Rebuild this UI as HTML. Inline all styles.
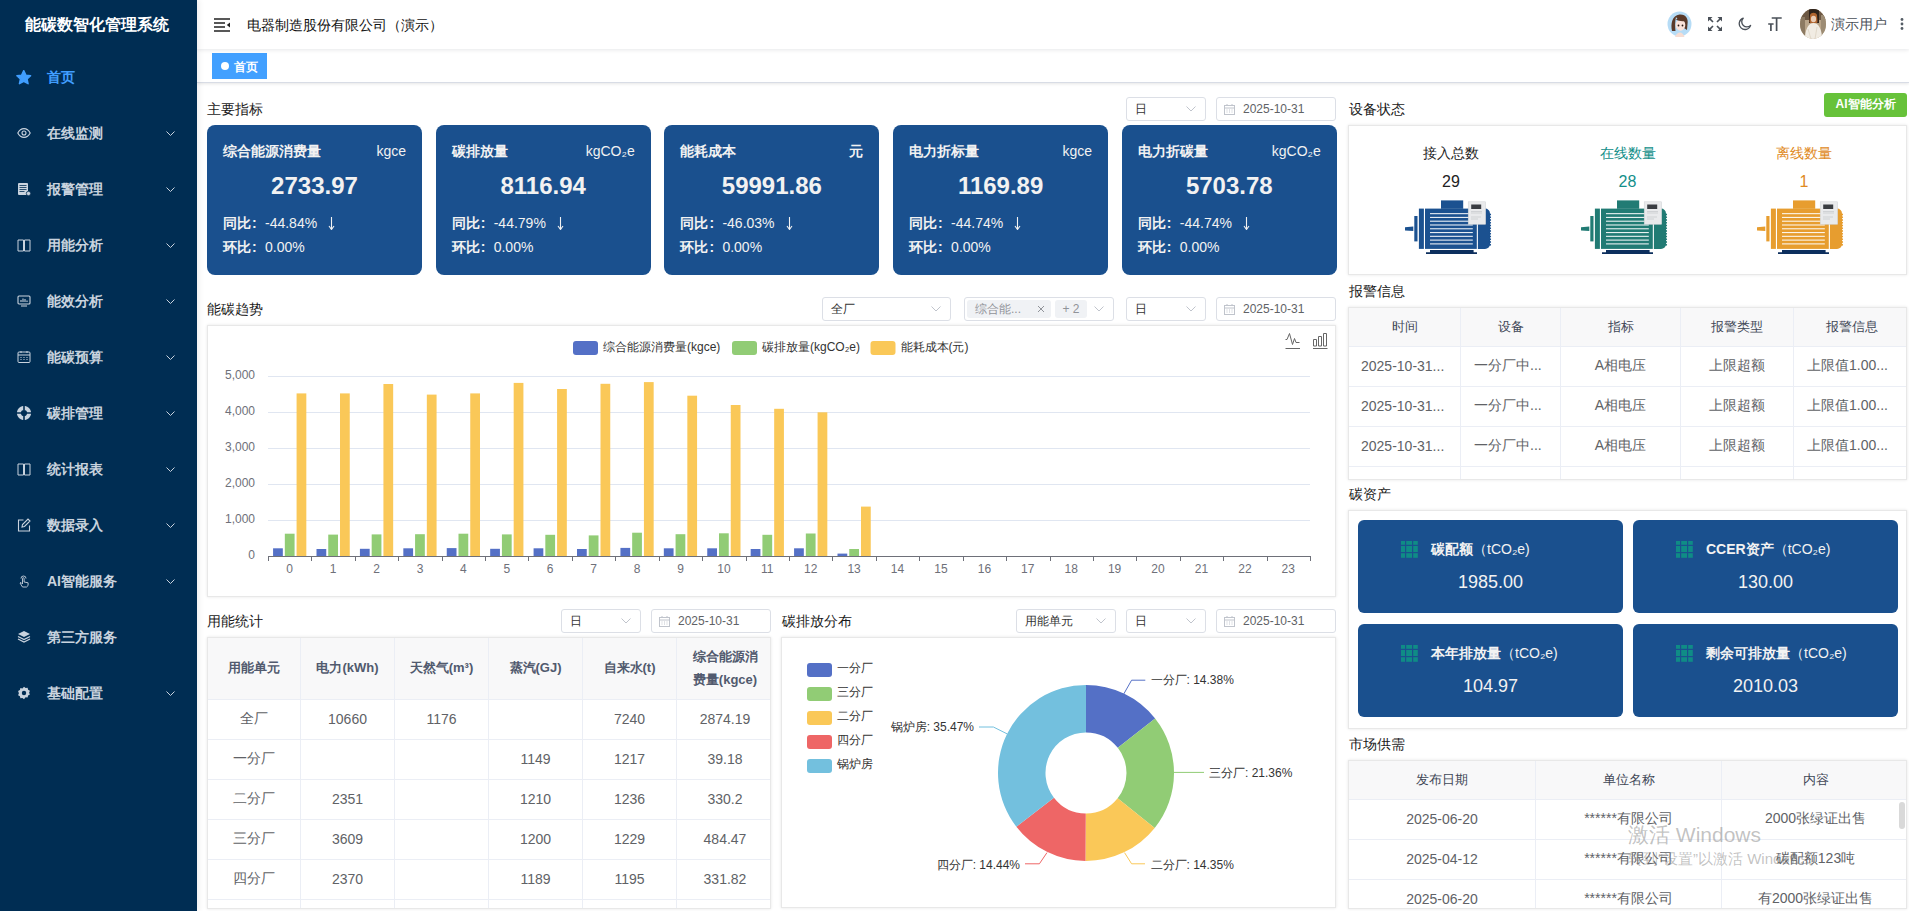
<!DOCTYPE html><html><head><meta charset="utf-8"><style>
*{box-sizing:border-box;margin:0;padding:0}
html,body{width:1909px;height:911px;overflow:hidden;background:#fff;font-family:"Liberation Sans",sans-serif;color:#303133}
.a{position:absolute}
#side{position:absolute;left:0;top:0;width:197px;height:911px;background:#002d53;box-shadow:2px 0 6px rgba(0,21,41,.07);z-index:5}
#side .logo{position:absolute;left:-2px;top:14px;width:197px;text-align:center;color:#fff;font-size:16px;font-weight:bold;line-height:22px;padding-left:0px}
.mi{position:absolute;left:0;width:197px;height:56px;color:#c9d3de;font-size:14px;font-weight:bold}
.mi svg.ic{position:absolute;left:17px;top:21px;width:14px;height:14px}
.mi .tx{position:absolute;left:47px;top:0;line-height:56px}
.mi svg.ar{position:absolute;left:166px;top:26px;width:9px;height:5px}
#hdr{position:absolute;left:197px;top:0;width:1712px;height:49px;background:#fff;box-shadow:0 1px 4px rgba(0,21,41,.10);z-index:2}
#tabs{position:absolute;left:197px;top:49px;width:1712px;height:34px;background:#fff;border-bottom:1px solid #d8dce5;box-shadow:0 1px 3px 0 rgba(0,0,0,.10)}
.tag{position:absolute;left:15px;top:4px;width:55px;height:26px;background:#42a0ff;color:#fff;font-size:12px;font-weight:bold;line-height:28px}
.tag i{position:absolute;left:9px;top:9px;width:8px;height:8px;border-radius:50%;background:#fff}
.tag span{position:absolute;left:22px;top:0}
.sec{position:absolute;font-size:14px;color:#1a1a1a;font-weight:500;line-height:20px}
.sel{position:absolute;height:24px;border:1px solid #dcdfe6;border-radius:3px;background:#fff;font-size:12px;color:#606266;line-height:22px}
.sel .v{position:absolute;left:8px;top:0;color:#333}
.sel svg.sa{position:absolute;right:9px;top:8px;width:10px;height:6px}
.sel svg.ci{position:absolute;left:7px;top:6px;width:11px;height:11px}
.sel.dt .v{left:26px;color:#606266}
.card{position:absolute;top:125px;width:215px;height:150px;background:#1a508e;border-radius:8px;color:#f2f2f2}
.card .t{position:absolute;left:16px;top:16px;font-size:14px;font-weight:bold;line-height:20px}
.card .u{position:absolute;right:16px;top:16px;font-size:14px;line-height:20px}
.card .n{position:absolute;left:0;width:100%;top:47px;text-align:center;font-size:24px;font-weight:bold;line-height:28px}
.card .l1{position:absolute;left:16px;top:88px;font-size:14px;line-height:20px;white-space:nowrap}
.card .l2{position:absolute;left:16px;top:112px;font-size:14px;line-height:20px;white-space:nowrap}
.card b{font-weight:bold}
.card .co{display:inline-block;width:14px;padding-left:1px;font-weight:bold}
.card svg.dn{position:relative;left:11px;top:2px}
.box{position:absolute;border:1px solid #e8e8e8;background:#fff;box-shadow:0 0 3px rgba(0,0,0,.10)}
table{border-collapse:collapse;table-layout:fixed}
.tb{position:absolute;font-size:14px;color:#606266}
.tb td,.tb th{border:1px solid #ebeef5;text-align:center;overflow:hidden;white-space:nowrap;padding:0}
.tb td{padding-bottom:2px}
.tb th{background:#f8f8f9;color:#515a6e;font-weight:bold;font-size:14px}
.tb th.n{font-weight:normal;font-size:13px;color:#3f4756}
.ac{position:absolute;width:265px;height:93px;background:#1a508e;border-radius:6px;color:#f2f2f2}
.ac .t{position:absolute;left:73px;top:19px;font-size:14px;font-weight:bold;line-height:20px;white-space:nowrap}
.ac .n{position:absolute;left:0;width:265px;text-align:center;top:50px;font-size:18px;line-height:24px}
.ac svg{position:absolute;left:43px;top:21px;width:17px;height:17px}
</style></head><body>
<div id="side"><div class="logo">能碳数智化管理系统</div>
<div class="mi" style="top:49px;color:#409eff"><svg class="ic" style="left:16px;top:20.5px;width:15.5px;height:15.5px" viewBox="0 0 14 14"><path d="M7 .6l1.9 4 4.3.6-3.2 2.9.9 4.3L7 10.3 3.1 12.4 4 8.1.8 5.2l4.3-.6z" fill="#409eff" stroke="#409eff" stroke-width="1.3" stroke-linejoin="round"/></svg><span class="tx">首页</span>
</div>
<div class="mi" style="top:105px;color:#c9d3de"><svg class="ic" viewBox="0 0 14 14"><path d="M.8 7C2.3 4 4.5 2.6 7 2.6S11.7 4 13.2 7C11.7 10 9.5 11.4 7 11.4S2.3 10 .8 7z" fill="none" stroke="#c9d3de" stroke-width="1.1"/><circle cx="7" cy="7" r="2" fill="none" stroke="#c9d3de" stroke-width="1.1"/></svg><span class="tx">在线监测</span>
<svg class="ar" viewBox="0 0 9 5"><path d="M.5 .5L4.5 4.5 8.5 .5" fill="none" stroke="#c9d3de" stroke-width="1"/></svg>
</div>
<div class="mi" style="top:161px;color:#c9d3de"><svg class="ic" viewBox="0 0 14 14"><rect x="1" y="1" width="10" height="12" rx="1" fill="#c9d3de"/><path d="M2.5 3.5h7M2.5 5.5h7M2.5 7.5h7M2.5 9.5h5" stroke="#002d53" stroke-width=".8"/><circle cx="11.5" cy="11.5" r="2.2" fill="#c9d3de" stroke="#002d53" stroke-width=".8"/></svg><span class="tx">报警管理</span>
<svg class="ar" viewBox="0 0 9 5"><path d="M.5 .5L4.5 4.5 8.5 .5" fill="none" stroke="#c9d3de" stroke-width="1"/></svg>
</div>
<div class="mi" style="top:217px;color:#c9d3de"><svg class="ic" viewBox="0 0 14 14"><path d="M1 2h5.5v11H1zM7.5 2H13v11H7.5z" fill="none" stroke="#c9d3de" stroke-width="1"/></svg><span class="tx">用能分析</span>
<svg class="ar" viewBox="0 0 9 5"><path d="M.5 .5L4.5 4.5 8.5 .5" fill="none" stroke="#c9d3de" stroke-width="1"/></svg>
</div>
<div class="mi" style="top:273px;color:#c9d3de"><svg class="ic" viewBox="0 0 14 14"><rect x="1" y="2" width="12" height="8" rx="1" fill="none" stroke="#c9d3de" stroke-width="1.1"/><path d="M4 8V6M6 8V4.5M8 8V5M10 8V6.5M4 12h6" stroke="#c9d3de" stroke-width="1.1"/></svg><span class="tx">能效分析</span>
<svg class="ar" viewBox="0 0 9 5"><path d="M.5 .5L4.5 4.5 8.5 .5" fill="none" stroke="#c9d3de" stroke-width="1"/></svg>
</div>
<div class="mi" style="top:329px;color:#c9d3de"><svg class="ic" viewBox="0 0 14 14"><rect x="1" y="2" width="12" height="10.5" rx="1" fill="none" stroke="#c9d3de" stroke-width="1"/><path d="M1 5h12M3.5 7.5h1M6.5 7.5h1M9.5 7.5h1M3.5 9.5h1M6.5 9.5h1M9.5 9.5h1M4 1v2M10 1v2" stroke="#c9d3de" stroke-width="1"/></svg><span class="tx">能碳预算</span>
<svg class="ar" viewBox="0 0 9 5"><path d="M.5 .5L4.5 4.5 8.5 .5" fill="none" stroke="#c9d3de" stroke-width="1"/></svg>
</div>
<div class="mi" style="top:385px;color:#c9d3de"><svg class="ic" viewBox="0 0 14 14"><circle cx="7" cy="7" r="5.1" fill="none" stroke="#c9d3de" stroke-width="4"/><path d="M7 0v4M7 10v4M0 7h4M10 7h4" stroke="#002d53" stroke-width="1.6"/></svg><span class="tx">碳排管理</span>
<svg class="ar" viewBox="0 0 9 5"><path d="M.5 .5L4.5 4.5 8.5 .5" fill="none" stroke="#c9d3de" stroke-width="1"/></svg>
</div>
<div class="mi" style="top:441px;color:#c9d3de"><svg class="ic" viewBox="0 0 14 14"><path d="M1 2h5.5v11H1zM7.5 2H13v11H7.5z" fill="none" stroke="#c9d3de" stroke-width="1"/></svg><span class="tx">统计报表</span>
<svg class="ar" viewBox="0 0 9 5"><path d="M.5 .5L4.5 4.5 8.5 .5" fill="none" stroke="#c9d3de" stroke-width="1"/></svg>
</div>
<div class="mi" style="top:497px;color:#c9d3de"><svg class="ic" viewBox="0 0 14 14"><path d="M6.5 2H1.5v11h11V7.5" fill="none" stroke="#c9d3de" stroke-width="1.1"/><path d="M5 9l.5-2.5L11 1l2 2-5.5 5.5z" fill="none" stroke="#c9d3de" stroke-width="1.1"/></svg><span class="tx">数据录入</span>
<svg class="ar" viewBox="0 0 9 5"><path d="M.5 .5L4.5 4.5 8.5 .5" fill="none" stroke="#c9d3de" stroke-width="1"/></svg>
</div>
<div class="mi" style="top:553px;color:#c9d3de"><svg class="ic" viewBox="0 0 14 14"><path d="M5.5 13l-2.5-4 1-.5 1.5 1.5V4.5a.8.8 0 011.6 0V8l4 .8v2.7L9.5 13z" fill="none" stroke="#c9d3de" stroke-width=".9"/><path d="M4 4.5a2.5 2.5 0 015 0" fill="none" stroke="#c9d3de" stroke-width=".9"/></svg><span class="tx">AI智能服务</span>
<svg class="ar" viewBox="0 0 9 5"><path d="M.5 .5L4.5 4.5 8.5 .5" fill="none" stroke="#c9d3de" stroke-width="1"/></svg>
</div>
<div class="mi" style="top:609px;color:#c9d3de"><svg class="ic" viewBox="0 0 14 14"><path d="M7 1L13 4 7 7 1 4z" fill="#c9d3de"/><path d="M1 6.5L7 9.5 13 6.5M1 9L7 12 13 9" fill="none" stroke="#c9d3de" stroke-width="1.3"/></svg><span class="tx">第三方服务</span>
</div>
<div class="mi" style="top:665px;color:#c9d3de"><svg class="ic" viewBox="0 0 14 14"><path d="M7 .8l1.6 1.3 2-.3.5 2 1.8 1-.8 1.9.8 1.9-1.8 1-.5 2-2-.3L7 13.2 5.4 11.9l-2 .3-.5-2-1.8-1 .8-1.9L1.1 5.1l1.8-1 .5-2 2 .3z" fill="#c9d3de"/><circle cx="7" cy="7" r="2.2" fill="#002d53"/></svg><span class="tx">基础配置</span>
<svg class="ar" viewBox="0 0 9 5"><path d="M.5 .5L4.5 4.5 8.5 .5" fill="none" stroke="#c9d3de" stroke-width="1"/></svg>
</div>
</div>
<div id="hdr">
<svg class="a" style="left:17px;top:18px" width="16" height="14" viewBox="0 0 16 14"><path d="M0 1h16M0 5h11M0 9h11M0 13h16" stroke="#222" stroke-width="1.6"/><path d="M16 4.5v5l-3.2-2.5z" fill="#222"/></svg>
<div class="a" style="left:50px;top:15px;font-size:14px;line-height:20px;color:#111">电器制造股份有限公司（演示）</div>
<svg class="a" style="left:1470px;top:11px" width="25" height="26" viewBox="0 0 25 26"><ellipse cx="12.5" cy="13" rx="12" ry="12.5" fill="#b6dcf6"/><path d="M5 20C3.5 13 5 4.5 12.5 3.5 19 3 21.5 8 20.5 13L20 19 17 17V10C14 10 10 8 9 6 8 10 8 16 8.5 20z" fill="#5a3a2a"/><ellipse cx="13.5" cy="14" rx="4.8" ry="5.8" fill="#fbe3da"/><path d="M9 8.5C11 10 15 10.5 18 10 17 7 14 6 12 6.5z" fill="#5a3a2a"/><circle cx="11.5" cy="14.5" r=".9" fill="#2a1a14"/><circle cx="15.5" cy="14.5" r=".9" fill="#2a1a14"/><path d="M8 26c1-3 3-4.5 5-4.5s3.5 1.5 4.5 4.5z" fill="#f6ddd3"/></svg>
<svg class="a" style="left:1511px;top:17px" width="14" height="14" viewBox="0 0 14 14"><g fill="#4a5058"><path d="M0 0h4.5L0 4.5z"/><path d="M14 0H9.5L14 4.5z"/><path d="M0 14h4.5L0 9.5z"/><path d="M14 14H9.5L14 9.5z"/></g><path d="M1.5 1.5L5 5M12.5 1.5L9 5M1.5 12.5L5 9M12.5 12.5L9 9" stroke="#4a5058" stroke-width="1.7"/></svg>
<svg class="a" style="left:1541px;top:17px" width="14" height="14" viewBox="0 0 14 14"><path d="M5.2 1.2A5.8 5.8 0 1012.6 8.4 4.6 4.6 0 015.2 1.2z" fill="none" stroke="#4a5058" stroke-width="1.3" stroke-linejoin="round"/></svg>
<svg class="a" style="left:1570px;top:17px" width="15" height="14" viewBox="0 0 15 14"><path d="M4.7 1h10M9.6 1V14M1.2 7h5.4M3.9 7V14" fill="none" stroke="#4a5058" stroke-width="1.7"/></svg>
<svg class="a" style="left:1603px;top:9px" width="26" height="30" viewBox="0 0 26 30"><defs><clipPath id="avc"><ellipse cx="13" cy="15" rx="13" ry="15"/></clipPath></defs><g clip-path="url(#avc)"><rect width="26" height="30" fill="#b9a58a"/><rect x="0" y="0" width="26" height="11" fill="#6d5843"/><rect x="9" y="0" width="10" height="14" fill="#2e231b"/><rect x="0" y="8" width="5" height="22" fill="#8c7a62"/><rect x="21" y="6" width="5" height="24" fill="#9d8c74"/><path d="M10 6c1-3 6-3 7 0l.5 7c-1 2-7 2-8 0z" fill="#b0652f"/><ellipse cx="13.5" cy="10" rx="2.6" ry="3.2" fill="#e9cdb7"/><path d="M5 30c0-9 3-16 8.5-16S22 21 22 30z" fill="#f1ece3"/><path d="M8 20l3 10M17 18l-2 12" stroke="#ddd3c3" stroke-width=".8"/></g></svg>
<div class="a" style="left:1634px;top:14px;font-size:14px;line-height:20px;color:#4a5058">演示用户</div>
<svg class="a" style="left:1703px;top:17px" width="4" height="14" viewBox="0 0 4 14"><circle cx="2" cy="2.5" r="1.4" fill="#555d66"/><circle cx="2" cy="7" r="1.4" fill="#555d66"/><circle cx="2" cy="11.5" r="1.4" fill="#555d66"/></svg>
</div>
<div id="tabs"><div class="tag"><i></i><span>首页</span></div></div>
<div class="sec" style="left:207px;top:99px">主要指标</div>
<div class="sel" style="left:1126px;top:97px;width:80px"><span class="v">日</span><svg class="sa" viewBox="0 0 10 6"><path d="M0.5 0.5L5 5L9.5 0.5" fill="none" stroke="#c0c4cc" stroke-width="1"/></svg></div>
<div class="sel dt" style="left:1216px;top:97px;width:120px"><svg class="ci" viewBox="0 0 11 11"><rect x="0.5" y="1.5" width="10" height="9" fill="none" stroke="#c0c4cc"/><path d="M0.5 4h10M3 0v2M8 0v2M2.5 6h1M5 6h1M7.5 6h1M2.5 8h1M5 8h1M7.5 8h1" stroke="#c0c4cc"/></svg><span class="v">2025-10-31</span></div>
<div class="card" style="left:207.0px"><div class="t">综合能源消费量</div><div class="u">kgce</div><div class="n">2733.97</div><div class="l1"><b>同比</b><span class="co">:</span>-44.84%<svg class="dn" width="7" height="13" viewBox="0 0 7 13"><path d="M3.5 0V12M1 9L3.5 12.5 6 9" fill="none" stroke="#f2f2f2" stroke-width="1.1"/></svg></div><div class="l2"><b>环比</b><span class="co">:</span>0.00%</div></div>
<div class="card" style="left:435.7px"><div class="t">碳排放量</div><div class="u">kgCO₂e</div><div class="n">8116.94</div><div class="l1"><b>同比</b><span class="co">:</span>-44.79%<svg class="dn" width="7" height="13" viewBox="0 0 7 13"><path d="M3.5 0V12M1 9L3.5 12.5 6 9" fill="none" stroke="#f2f2f2" stroke-width="1.1"/></svg></div><div class="l2"><b>环比</b><span class="co">:</span>0.00%</div></div>
<div class="card" style="left:664.4px"><div class="t">能耗成本</div><div class="u"><b>元</b></div><div class="n">59991.86</div><div class="l1"><b>同比</b><span class="co">:</span>-46.03%<svg class="dn" width="7" height="13" viewBox="0 0 7 13"><path d="M3.5 0V12M1 9L3.5 12.5 6 9" fill="none" stroke="#f2f2f2" stroke-width="1.1"/></svg></div><div class="l2"><b>环比</b><span class="co">:</span>0.00%</div></div>
<div class="card" style="left:893.1px"><div class="t">电力折标量</div><div class="u">kgce</div><div class="n">1169.89</div><div class="l1"><b>同比</b><span class="co">:</span>-44.74%<svg class="dn" width="7" height="13" viewBox="0 0 7 13"><path d="M3.5 0V12M1 9L3.5 12.5 6 9" fill="none" stroke="#f2f2f2" stroke-width="1.1"/></svg></div><div class="l2"><b>环比</b><span class="co">:</span>0.00%</div></div>
<div class="card" style="left:1121.8px"><div class="t">电力折碳量</div><div class="u">kgCO₂e</div><div class="n">5703.78</div><div class="l1"><b>同比</b><span class="co">:</span>-44.74%<svg class="dn" width="7" height="13" viewBox="0 0 7 13"><path d="M3.5 0V12M1 9L3.5 12.5 6 9" fill="none" stroke="#f2f2f2" stroke-width="1.1"/></svg></div><div class="l2"><b>环比</b><span class="co">:</span>0.00%</div></div>
<div class="sec" style="left:1349px;top:99px">设备状态</div>
<div class="a" style="left:1824px;top:93px;width:83px;height:24px;background:#67c23a;border-radius:3px;color:#fff;font-size:12px;font-weight:bold;line-height:22px;text-align:center">AI智能分析</div>
<div class="box" style="left:1348px;top:125px;width:559px;height:150px"></div>
<div class="a" style="left:1391px;top:143px;width:120px;text-align:center;font-size:14px;line-height:20px;color:#222">接入总数</div>
<div class="a" style="left:1391px;top:172px;width:120px;text-align:center;font-size:16px;line-height:20px;color:#222">29</div>
<svg class="a" style="left:1400px;top:195px" width="92" height="60" viewBox="0 0 92 60"><path d="M5 32.3L13.3 31.6V36L5 35.5z" fill="#1b5190"/><rect x="14.3" y="21" width="3.2" height="25.4" fill="#1b5190"/><rect x="18.9" y="13.6" width="5" height="40.3" fill="#1b5190"/><rect x="25" y="13.6" width="51.8" height="40.3" fill="#1b5190"/><rect x="41" y="5.4" width="22.2" height="8.4" fill="#1b5190"/><path d="M77.9 13.6H85a5 5 0 015 5v30.3a5 5 0 01-5 5h-7.1z" fill="#1b5190"/><path d="M30 55h43.6v2.3H30zM26 57.2h51V59H26z" fill="#0d2f5e"/><circle cx="90" cy="19.50" r="1.1" fill="#1b5190"/><circle cx="90" cy="22.25" r="1.1" fill="#1b5190"/><circle cx="90" cy="25.00" r="1.1" fill="#1b5190"/><circle cx="90" cy="27.75" r="1.1" fill="#1b5190"/><circle cx="90" cy="30.50" r="1.1" fill="#1b5190"/><circle cx="90" cy="33.25" r="1.1" fill="#1b5190"/><circle cx="90" cy="36.00" r="1.1" fill="#1b5190"/><circle cx="90" cy="38.75" r="1.1" fill="#1b5190"/><circle cx="90" cy="41.50" r="1.1" fill="#1b5190"/><circle cx="90" cy="44.25" r="1.1" fill="#1b5190"/><circle cx="90" cy="47.00" r="1.1" fill="#1b5190"/><circle cx="90" cy="49.75" r="1.1" fill="#1b5190"/><rect x="30" y="18.10" width="42.8" height="1.1" fill="#fff" opacity=".9"/><rect x="30" y="21.88" width="42.8" height="1.1" fill="#fff" opacity=".9"/><rect x="30" y="25.66" width="42.8" height="1.1" fill="#fff" opacity=".9"/><rect x="30" y="29.44" width="42.8" height="1.1" fill="#fff" opacity=".9"/><rect x="30" y="33.22" width="42.8" height="1.1" fill="#fff" opacity=".9"/><rect x="30" y="37.00" width="42.8" height="1.1" fill="#fff" opacity=".9"/><rect x="30" y="40.78" width="42.8" height="1.1" fill="#fff" opacity=".9"/><rect x="30" y="44.56" width="42.8" height="1.1" fill="#fff" opacity=".9"/><rect x="30" y="48.34" width="42.8" height="1.1" fill="#fff" opacity=".9"/><rect x="68.2" y="6.8" width="17.5" height="22.5" fill="#e9eaec" stroke="#cfd2d6" stroke-width=".5"/><rect x="71.2" y="9.5" width="10" height="4.5" fill="#3a3d42"/><path d="M71 16.5h11M71 18h11M71 22h10M71 24h7" stroke="#a9adb3" stroke-width=".4"/></svg>
<div class="a" style="left:1567.5px;top:143px;width:120px;text-align:center;font-size:14px;line-height:20px;color:#138f8a">在线数量</div>
<div class="a" style="left:1567.5px;top:172px;width:120px;text-align:center;font-size:16px;line-height:20px;color:#138f8a">28</div>
<svg class="a" style="left:1576px;top:195px" width="92" height="60" viewBox="0 0 92 60"><path d="M5 32.3L13.3 31.6V36L5 35.5z" fill="#217b74"/><rect x="14.3" y="21" width="3.2" height="25.4" fill="#217b74"/><rect x="18.9" y="13.6" width="5" height="40.3" fill="#217b74"/><rect x="25" y="13.6" width="51.8" height="40.3" fill="#217b74"/><rect x="41" y="5.4" width="22.2" height="8.4" fill="#217b74"/><path d="M77.9 13.6H85a5 5 0 015 5v30.3a5 5 0 01-5 5h-7.1z" fill="#217b74"/><path d="M30 55h43.6v2.3H30zM26 57.2h51V59H26z" fill="#0d2f5e"/><circle cx="90" cy="19.50" r="1.1" fill="#217b74"/><circle cx="90" cy="22.25" r="1.1" fill="#217b74"/><circle cx="90" cy="25.00" r="1.1" fill="#217b74"/><circle cx="90" cy="27.75" r="1.1" fill="#217b74"/><circle cx="90" cy="30.50" r="1.1" fill="#217b74"/><circle cx="90" cy="33.25" r="1.1" fill="#217b74"/><circle cx="90" cy="36.00" r="1.1" fill="#217b74"/><circle cx="90" cy="38.75" r="1.1" fill="#217b74"/><circle cx="90" cy="41.50" r="1.1" fill="#217b74"/><circle cx="90" cy="44.25" r="1.1" fill="#217b74"/><circle cx="90" cy="47.00" r="1.1" fill="#217b74"/><circle cx="90" cy="49.75" r="1.1" fill="#217b74"/><rect x="30" y="18.10" width="42.8" height="1.1" fill="#fff" opacity=".9"/><rect x="30" y="21.88" width="42.8" height="1.1" fill="#fff" opacity=".9"/><rect x="30" y="25.66" width="42.8" height="1.1" fill="#fff" opacity=".9"/><rect x="30" y="29.44" width="42.8" height="1.1" fill="#fff" opacity=".9"/><rect x="30" y="33.22" width="42.8" height="1.1" fill="#fff" opacity=".9"/><rect x="30" y="37.00" width="42.8" height="1.1" fill="#fff" opacity=".9"/><rect x="30" y="40.78" width="42.8" height="1.1" fill="#fff" opacity=".9"/><rect x="30" y="44.56" width="42.8" height="1.1" fill="#fff" opacity=".9"/><rect x="30" y="48.34" width="42.8" height="1.1" fill="#fff" opacity=".9"/><rect x="68.2" y="6.8" width="17.5" height="22.5" fill="#e9eaec" stroke="#cfd2d6" stroke-width=".5"/><rect x="71.2" y="9.5" width="10" height="4.5" fill="#3a3d42"/><path d="M71 16.5h11M71 18h11M71 22h10M71 24h7" stroke="#a9adb3" stroke-width=".4"/></svg>
<div class="a" style="left:1744px;top:143px;width:120px;text-align:center;font-size:14px;line-height:20px;color:#e08a1e">离线数量</div>
<div class="a" style="left:1744px;top:172px;width:120px;text-align:center;font-size:16px;line-height:20px;color:#e08a1e">1</div>
<svg class="a" style="left:1752px;top:195px" width="92" height="60" viewBox="0 0 92 60"><path d="M5 32.3L13.3 31.6V36L5 35.5z" fill="#e79d2f"/><rect x="14.3" y="21" width="3.2" height="25.4" fill="#e79d2f"/><rect x="18.9" y="13.6" width="5" height="40.3" fill="#e79d2f"/><rect x="25" y="13.6" width="51.8" height="40.3" fill="#e79d2f"/><rect x="41" y="5.4" width="22.2" height="8.4" fill="#e79d2f"/><path d="M77.9 13.6H85a5 5 0 015 5v30.3a5 5 0 01-5 5h-7.1z" fill="#e79d2f"/><path d="M30 55h43.6v2.3H30zM26 57.2h51V59H26z" fill="#0d2f5e"/><circle cx="90" cy="19.50" r="1.1" fill="#e79d2f"/><circle cx="90" cy="22.25" r="1.1" fill="#e79d2f"/><circle cx="90" cy="25.00" r="1.1" fill="#e79d2f"/><circle cx="90" cy="27.75" r="1.1" fill="#e79d2f"/><circle cx="90" cy="30.50" r="1.1" fill="#e79d2f"/><circle cx="90" cy="33.25" r="1.1" fill="#e79d2f"/><circle cx="90" cy="36.00" r="1.1" fill="#e79d2f"/><circle cx="90" cy="38.75" r="1.1" fill="#e79d2f"/><circle cx="90" cy="41.50" r="1.1" fill="#e79d2f"/><circle cx="90" cy="44.25" r="1.1" fill="#e79d2f"/><circle cx="90" cy="47.00" r="1.1" fill="#e79d2f"/><circle cx="90" cy="49.75" r="1.1" fill="#e79d2f"/><rect x="30" y="18.10" width="42.8" height="1.1" fill="#fff" opacity=".9"/><rect x="30" y="21.88" width="42.8" height="1.1" fill="#fff" opacity=".9"/><rect x="30" y="25.66" width="42.8" height="1.1" fill="#fff" opacity=".9"/><rect x="30" y="29.44" width="42.8" height="1.1" fill="#fff" opacity=".9"/><rect x="30" y="33.22" width="42.8" height="1.1" fill="#fff" opacity=".9"/><rect x="30" y="37.00" width="42.8" height="1.1" fill="#fff" opacity=".9"/><rect x="30" y="40.78" width="42.8" height="1.1" fill="#fff" opacity=".9"/><rect x="30" y="44.56" width="42.8" height="1.1" fill="#fff" opacity=".9"/><rect x="30" y="48.34" width="42.8" height="1.1" fill="#fff" opacity=".9"/><rect x="68.2" y="6.8" width="17.5" height="22.5" fill="#e9eaec" stroke="#cfd2d6" stroke-width=".5"/><rect x="71.2" y="9.5" width="10" height="4.5" fill="#3a3d42"/><path d="M71 16.5h11M71 18h11M71 22h10M71 24h7" stroke="#a9adb3" stroke-width=".4"/></svg>
<div class="sec" style="left:1349px;top:281px">报警信息</div>
<div class="a" style="left:1348px;top:307px;width:559px;height:173px;overflow:hidden;border:1px solid #e8e8e8;box-shadow:0 0 3px rgba(0,0,0,.10)"><table class="tb" style="left:-1px;top:-1px;width:561px"><colgroup><col style="width:112px"><col style="width:100px"><col style="width:120px"><col style="width:113px"><col style="width:116px"></colgroup><tr style="height:39px"><th class="n">时间</th><th class="n">设备</th><th class="n">指标</th><th class="n">报警类型</th><th class="n">报警信息</th></tr><tr style="height:40px"><td style="text-align:left;padding-left:12px">2025-10-31...</td><td style="text-align:left;padding-left:13px">一分厂中...</td><td>A相电压</td><td>上限超额</td><td style="text-align:left;padding-left:13px">上限值1.00...</td></tr><tr style="height:40px"><td style="text-align:left;padding-left:12px">2025-10-31...</td><td style="text-align:left;padding-left:13px">一分厂中...</td><td>A相电压</td><td>上限超额</td><td style="text-align:left;padding-left:13px">上限值1.00...</td></tr><tr style="height:40px"><td style="text-align:left;padding-left:12px">2025-10-31...</td><td style="text-align:left;padding-left:13px">一分厂中...</td><td>A相电压</td><td>上限超额</td><td style="text-align:left;padding-left:13px">上限值1.00...</td></tr><tr style="height:40px"><td></td><td></td><td></td><td></td><td></td></tr></table></div>
<div class="sec" style="left:1349px;top:484px">碳资产</div>
<div class="box" style="left:1348px;top:510px;width:559px;height:219px"></div>
<div class="ac" style="left:1358px;top:520px"><svg viewBox="0 0 17 17"><rect x="0" y="0" width="4" height="3.8" fill="#0f8c86"/><rect x="0" y="5" width="4" height="6" fill="#0f8c86"/><rect x="0" y="12.2" width="4" height="4.6" fill="#0f8c86"/><rect x="5.2" y="0" width="5.8" height="3.8" fill="#0f8c86"/><rect x="5.2" y="5" width="5.8" height="6" fill="#0f8c86"/><rect x="5.2" y="12.2" width="5.8" height="4.6" fill="#0f8c86"/><rect x="12.2" y="0" width="4.6" height="3.8" fill="#0f8c86"/><rect x="12.2" y="5" width="4.6" height="6" fill="#0f8c86"/><rect x="12.2" y="12.2" width="4.6" height="4.6" fill="#0f8c86"/></svg><div class="t">碳配额<span style="font-weight:normal">（tCO₂e)</span></div><div class="n">1985.00</div></div>
<div class="ac" style="left:1633px;top:520px"><svg viewBox="0 0 17 17"><rect x="0" y="0" width="4" height="3.8" fill="#0f8c86"/><rect x="0" y="5" width="4" height="6" fill="#0f8c86"/><rect x="0" y="12.2" width="4" height="4.6" fill="#0f8c86"/><rect x="5.2" y="0" width="5.8" height="3.8" fill="#0f8c86"/><rect x="5.2" y="5" width="5.8" height="6" fill="#0f8c86"/><rect x="5.2" y="12.2" width="5.8" height="4.6" fill="#0f8c86"/><rect x="12.2" y="0" width="4.6" height="3.8" fill="#0f8c86"/><rect x="12.2" y="5" width="4.6" height="6" fill="#0f8c86"/><rect x="12.2" y="12.2" width="4.6" height="4.6" fill="#0f8c86"/></svg><div class="t">CCER资产<span style="font-weight:normal">（tCO₂e)</span></div><div class="n">130.00</div></div>
<div class="ac" style="left:1358px;top:624px"><svg viewBox="0 0 17 17"><rect x="0" y="0" width="4" height="3.8" fill="#0f8c86"/><rect x="0" y="5" width="4" height="6" fill="#0f8c86"/><rect x="0" y="12.2" width="4" height="4.6" fill="#0f8c86"/><rect x="5.2" y="0" width="5.8" height="3.8" fill="#0f8c86"/><rect x="5.2" y="5" width="5.8" height="6" fill="#0f8c86"/><rect x="5.2" y="12.2" width="5.8" height="4.6" fill="#0f8c86"/><rect x="12.2" y="0" width="4.6" height="3.8" fill="#0f8c86"/><rect x="12.2" y="5" width="4.6" height="6" fill="#0f8c86"/><rect x="12.2" y="12.2" width="4.6" height="4.6" fill="#0f8c86"/></svg><div class="t">本年排放量<span style="font-weight:normal">（tCO₂e)</span></div><div class="n">104.97</div></div>
<div class="ac" style="left:1633px;top:624px"><svg viewBox="0 0 17 17"><rect x="0" y="0" width="4" height="3.8" fill="#0f8c86"/><rect x="0" y="5" width="4" height="6" fill="#0f8c86"/><rect x="0" y="12.2" width="4" height="4.6" fill="#0f8c86"/><rect x="5.2" y="0" width="5.8" height="3.8" fill="#0f8c86"/><rect x="5.2" y="5" width="5.8" height="6" fill="#0f8c86"/><rect x="5.2" y="12.2" width="5.8" height="4.6" fill="#0f8c86"/><rect x="12.2" y="0" width="4.6" height="3.8" fill="#0f8c86"/><rect x="12.2" y="5" width="4.6" height="6" fill="#0f8c86"/><rect x="12.2" y="12.2" width="4.6" height="4.6" fill="#0f8c86"/></svg><div class="t">剩余可排放量<span style="font-weight:normal">（tCO₂e)</span></div><div class="n">2010.03</div></div>
<div class="sec" style="left:1349px;top:734px">市场供需</div>
<div class="a" style="left:1348px;top:760px;width:559px;height:149px;overflow:hidden;border:1px solid #e8e8e8;box-shadow:0 0 3px rgba(0,0,0,.10)"><table class="tb" style="left:-1px;top:-1px;width:561px"><colgroup><col style="width:187px"><col style="width:186px"><col style="width:188px"></colgroup><tr style="height:39px"><th class="n">发布日期</th><th class="n">单位名称</th><th class="n">内容</th></tr><tr style="height:40px"><td>2025-06-20</td><td>******有限公司</td><td>2000张绿证出售</td></tr><tr style="height:40px"><td>2025-04-12</td><td>******有限公司</td><td>碳配额123吨</td></tr><tr style="height:40px"><td>2025-06-20</td><td>******有限公司</td><td>有2000张绿证出售</td></tr></table><div class="a" style="left:550px;top:41px;width:6px;height:27px;border-radius:3px;background:#d9d9d9"></div></div>
<div class="a" style="left:1628px;top:823px;font-size:21px;line-height:24px;color:rgba(120,120,120,.45)">激活 Windows</div>
<div class="a" style="left:1628px;top:849px;font-size:15px;line-height:20px;color:rgba(120,120,120,.45)">转到“设置”以激活 Windows。</div>
<div class="sec" style="left:207px;top:299px">能碳趋势</div>
<div class="sel" style="left:822px;top:297px;width:129px"><span class="v">全厂</span><svg class="sa" viewBox="0 0 10 6"><path d="M0.5 0.5L5 5L9.5 0.5" fill="none" stroke="#c0c4cc" stroke-width="1"/></svg></div>
<div class="sel" style="left:964px;top:297px;width:150px"><div class="a" style="left:2px;top:2px;width:84px;height:18px;background:#f0f2f5;border-radius:3px;color:#909399;line-height:18px"><span class="a" style="left:8px">综合能...</span><svg class="a" style="left:70px;top:5px" width="8" height="8" viewBox="0 0 8 8"><path d="M1 1l6 6M7 1L1 7" stroke="#909399" stroke-width="1"/></svg></div><div class="a" style="left:90px;top:2px;width:32px;height:18px;background:#f0f2f5;border-radius:3px;color:#909399;line-height:18px;text-align:center">+ 2</div><svg class="sa" viewBox="0 0 10 6"><path d="M0.5 0.5L5 5L9.5 0.5" fill="none" stroke="#c0c4cc" stroke-width="1"/></svg></div>
<div class="sel" style="left:1126px;top:297px;width:80px"><span class="v">日</span><svg class="sa" viewBox="0 0 10 6"><path d="M0.5 0.5L5 5L9.5 0.5" fill="none" stroke="#c0c4cc" stroke-width="1"/></svg></div>
<div class="sel dt" style="left:1216px;top:297px;width:120px"><svg class="ci" viewBox="0 0 11 11"><rect x="0.5" y="1.5" width="10" height="9" fill="none" stroke="#c0c4cc"/><path d="M0.5 4h10M3 0v2M8 0v2M2.5 6h1M5 6h1M7.5 6h1M2.5 8h1M5 8h1M7.5 8h1" stroke="#c0c4cc"/></svg><span class="v">2025-10-31</span></div>
<div class="box" style="left:207px;top:325px;width:1129px;height:272px"></div>
<svg class="a" style="left:0;top:0" width="1909" height="911" viewBox="0 0 1909 911"><path d="M268 520.5H1310" stroke="#e0e6f1" stroke-width="1"/><path d="M268 484.5H1310" stroke="#e0e6f1" stroke-width="1"/><path d="M268 448.5H1310" stroke="#e0e6f1" stroke-width="1"/><path d="M268 412.5H1310" stroke="#e0e6f1" stroke-width="1"/><path d="M268 376.5H1310" stroke="#e0e6f1" stroke-width="1"/><text x="255" y="558.8" text-anchor="end" font-size="12" fill="#6e7079" font-family="Liberation Sans">0</text><text x="255" y="522.8" text-anchor="end" font-size="12" fill="#6e7079" font-family="Liberation Sans">1,000</text><text x="255" y="486.8" text-anchor="end" font-size="12" fill="#6e7079" font-family="Liberation Sans">2,000</text><text x="255" y="450.8" text-anchor="end" font-size="12" fill="#6e7079" font-family="Liberation Sans">3,000</text><text x="255" y="414.8" text-anchor="end" font-size="12" fill="#6e7079" font-family="Liberation Sans">4,000</text><text x="255" y="378.8" text-anchor="end" font-size="12" fill="#6e7079" font-family="Liberation Sans">5,000</text><rect x="273.08" y="548.30" width="9.75" height="7.70" fill="#5470c6"/><rect x="284.83" y="533.70" width="9.75" height="22.30" fill="#91cc75"/><rect x="296.58" y="393.40" width="9.75" height="162.60" fill="#fac858"/><rect x="316.50" y="549.00" width="9.75" height="7.00" fill="#5470c6"/><rect x="328.25" y="534.60" width="9.75" height="21.40" fill="#91cc75"/><rect x="340.00" y="393.40" width="9.75" height="162.60" fill="#fac858"/><rect x="359.92" y="548.80" width="9.75" height="7.20" fill="#5470c6"/><rect x="371.67" y="534.40" width="9.75" height="21.60" fill="#91cc75"/><rect x="383.42" y="384.00" width="9.75" height="172.00" fill="#fac858"/><rect x="403.33" y="548.30" width="9.75" height="7.70" fill="#5470c6"/><rect x="415.08" y="534.20" width="9.75" height="21.80" fill="#91cc75"/><rect x="426.83" y="394.60" width="9.75" height="161.40" fill="#fac858"/><rect x="446.75" y="548.10" width="9.75" height="7.90" fill="#5470c6"/><rect x="458.50" y="533.70" width="9.75" height="22.30" fill="#91cc75"/><rect x="470.25" y="393.40" width="9.75" height="162.60" fill="#fac858"/><rect x="490.17" y="548.80" width="9.75" height="7.20" fill="#5470c6"/><rect x="501.92" y="534.40" width="9.75" height="21.60" fill="#91cc75"/><rect x="513.67" y="382.90" width="9.75" height="173.10" fill="#fac858"/><rect x="533.58" y="548.30" width="9.75" height="7.70" fill="#5470c6"/><rect x="545.33" y="534.80" width="9.75" height="21.20" fill="#91cc75"/><rect x="557.08" y="389.00" width="9.75" height="167.00" fill="#fac858"/><rect x="577.00" y="549.00" width="9.75" height="7.00" fill="#5470c6"/><rect x="588.75" y="535.40" width="9.75" height="20.60" fill="#91cc75"/><rect x="600.50" y="383.80" width="9.75" height="172.20" fill="#fac858"/><rect x="620.42" y="547.90" width="9.75" height="8.10" fill="#5470c6"/><rect x="632.17" y="532.70" width="9.75" height="23.30" fill="#91cc75"/><rect x="643.92" y="382.10" width="9.75" height="173.90" fill="#fac858"/><rect x="663.83" y="548.30" width="9.75" height="7.70" fill="#5470c6"/><rect x="675.58" y="534.20" width="9.75" height="21.80" fill="#91cc75"/><rect x="687.33" y="395.70" width="9.75" height="160.30" fill="#fac858"/><rect x="707.25" y="548.30" width="9.75" height="7.70" fill="#5470c6"/><rect x="719.00" y="533.30" width="9.75" height="22.70" fill="#91cc75"/><rect x="730.75" y="405.00" width="9.75" height="151.00" fill="#fac858"/><rect x="750.67" y="549.00" width="9.75" height="7.00" fill="#5470c6"/><rect x="762.42" y="534.80" width="9.75" height="21.20" fill="#91cc75"/><rect x="774.17" y="408.80" width="9.75" height="147.20" fill="#fac858"/><rect x="794.08" y="548.30" width="9.75" height="7.70" fill="#5470c6"/><rect x="805.83" y="533.50" width="9.75" height="22.50" fill="#91cc75"/><rect x="817.58" y="412.30" width="9.75" height="143.70" fill="#fac858"/><rect x="837.50" y="553.60" width="9.75" height="2.40" fill="#5470c6"/><rect x="849.25" y="549.00" width="9.75" height="7.00" fill="#91cc75"/><rect x="861.00" y="506.60" width="9.75" height="49.40" fill="#fac858"/><path d="M268 556.5H1310.5" stroke="#6e7079" stroke-width="1"/><path d="M268.5 556V561" stroke="#6e7079" stroke-width="1"/><path d="M311.5 556V561" stroke="#6e7079" stroke-width="1"/><path d="M355.5 556V561" stroke="#6e7079" stroke-width="1"/><path d="M398.5 556V561" stroke="#6e7079" stroke-width="1"/><path d="M442.5 556V561" stroke="#6e7079" stroke-width="1"/><path d="M485.5 556V561" stroke="#6e7079" stroke-width="1"/><path d="M528.5 556V561" stroke="#6e7079" stroke-width="1"/><path d="M572.5 556V561" stroke="#6e7079" stroke-width="1"/><path d="M615.5 556V561" stroke="#6e7079" stroke-width="1"/><path d="M659.5 556V561" stroke="#6e7079" stroke-width="1"/><path d="M702.5 556V561" stroke="#6e7079" stroke-width="1"/><path d="M746.5 556V561" stroke="#6e7079" stroke-width="1"/><path d="M789.5 556V561" stroke="#6e7079" stroke-width="1"/><path d="M832.5 556V561" stroke="#6e7079" stroke-width="1"/><path d="M876.5 556V561" stroke="#6e7079" stroke-width="1"/><path d="M919.5 556V561" stroke="#6e7079" stroke-width="1"/><path d="M963.5 556V561" stroke="#6e7079" stroke-width="1"/><path d="M1006.5 556V561" stroke="#6e7079" stroke-width="1"/><path d="M1050.5 556V561" stroke="#6e7079" stroke-width="1"/><path d="M1093.5 556V561" stroke="#6e7079" stroke-width="1"/><path d="M1136.5 556V561" stroke="#6e7079" stroke-width="1"/><path d="M1180.5 556V561" stroke="#6e7079" stroke-width="1"/><path d="M1223.5 556V561" stroke="#6e7079" stroke-width="1"/><path d="M1267.5 556V561" stroke="#6e7079" stroke-width="1"/><path d="M1310.5 556V561" stroke="#6e7079" stroke-width="1"/><text x="289.7" y="573" text-anchor="middle" font-size="12" fill="#6e7079" font-family="Liberation Sans">0</text><text x="333.1" y="573" text-anchor="middle" font-size="12" fill="#6e7079" font-family="Liberation Sans">1</text><text x="376.5" y="573" text-anchor="middle" font-size="12" fill="#6e7079" font-family="Liberation Sans">2</text><text x="420.0" y="573" text-anchor="middle" font-size="12" fill="#6e7079" font-family="Liberation Sans">3</text><text x="463.4" y="573" text-anchor="middle" font-size="12" fill="#6e7079" font-family="Liberation Sans">4</text><text x="506.8" y="573" text-anchor="middle" font-size="12" fill="#6e7079" font-family="Liberation Sans">5</text><text x="550.2" y="573" text-anchor="middle" font-size="12" fill="#6e7079" font-family="Liberation Sans">6</text><text x="593.6" y="573" text-anchor="middle" font-size="12" fill="#6e7079" font-family="Liberation Sans">7</text><text x="637.0" y="573" text-anchor="middle" font-size="12" fill="#6e7079" font-family="Liberation Sans">8</text><text x="680.5" y="573" text-anchor="middle" font-size="12" fill="#6e7079" font-family="Liberation Sans">9</text><text x="723.9" y="573" text-anchor="middle" font-size="12" fill="#6e7079" font-family="Liberation Sans">10</text><text x="767.3" y="573" text-anchor="middle" font-size="12" fill="#6e7079" font-family="Liberation Sans">11</text><text x="810.7" y="573" text-anchor="middle" font-size="12" fill="#6e7079" font-family="Liberation Sans">12</text><text x="854.1" y="573" text-anchor="middle" font-size="12" fill="#6e7079" font-family="Liberation Sans">13</text><text x="897.5" y="573" text-anchor="middle" font-size="12" fill="#6e7079" font-family="Liberation Sans">14</text><text x="941.0" y="573" text-anchor="middle" font-size="12" fill="#6e7079" font-family="Liberation Sans">15</text><text x="984.4" y="573" text-anchor="middle" font-size="12" fill="#6e7079" font-family="Liberation Sans">16</text><text x="1027.8" y="573" text-anchor="middle" font-size="12" fill="#6e7079" font-family="Liberation Sans">17</text><text x="1071.2" y="573" text-anchor="middle" font-size="12" fill="#6e7079" font-family="Liberation Sans">18</text><text x="1114.6" y="573" text-anchor="middle" font-size="12" fill="#6e7079" font-family="Liberation Sans">19</text><text x="1158.0" y="573" text-anchor="middle" font-size="12" fill="#6e7079" font-family="Liberation Sans">20</text><text x="1201.5" y="573" text-anchor="middle" font-size="12" fill="#6e7079" font-family="Liberation Sans">21</text><text x="1244.9" y="573" text-anchor="middle" font-size="12" fill="#6e7079" font-family="Liberation Sans">22</text><text x="1288.3" y="573" text-anchor="middle" font-size="12" fill="#6e7079" font-family="Liberation Sans">23</text><rect x="573" y="341" width="25" height="14" rx="3" fill="#5470c6"/><text x="603" y="350.8" font-size="12" fill="#333" font-family="Liberation Sans">综合能源消费量(kgce)</text><rect x="732" y="341" width="25" height="14" rx="3" fill="#91cc75"/><text x="762" y="350.8" font-size="12" fill="#333" font-family="Liberation Sans">碳排放量(kgCO₂e)</text><rect x="870.5" y="341" width="25" height="14" rx="3" fill="#fac858"/><text x="900.5" y="350.8" font-size="12" fill="#333" font-family="Liberation Sans">能耗成本(元)</text><path d="M1285.5 339.5h1.5l2.5-6 3 11 2-6 1.5 4h3.5M1285.5 348.5h14.5" fill="none" stroke="#666" stroke-width="1"/><path d="M1313.5 339.5h3v6.5h-3zM1318.5 336.5h3v9.5h-3zM1323.5 333.5h3v12.5h-3zM1313 348.5h14.5" fill="none" stroke="#666" stroke-width="1"/></svg>
<div class="sec" style="left:207px;top:611px">用能统计</div>
<div class="sel" style="left:561px;top:609px;width:80px"><span class="v">日</span><svg class="sa" viewBox="0 0 10 6"><path d="M0.5 0.5L5 5L9.5 0.5" fill="none" stroke="#c0c4cc" stroke-width="1"/></svg></div>
<div class="sel dt" style="left:651px;top:609px;width:120px"><svg class="ci" viewBox="0 0 11 11"><rect x="0.5" y="1.5" width="10" height="9" fill="none" stroke="#c0c4cc"/><path d="M0.5 4h10M3 0v2M8 0v2M2.5 6h1M5 6h1M7.5 6h1M2.5 8h1M5 8h1M7.5 8h1" stroke="#c0c4cc"/></svg><span class="v">2025-10-31</span></div>
<div class="a" style="left:207px;top:637px;width:564px;height:272px;overflow:hidden;border:1px solid #e8e8e8;box-shadow:0 0 3px rgba(0,0,0,.10)"><table class="tb" style="left:-1px;top:-1px;width:566px"><colgroup><col style="width:93px"><col style="width:94px"><col style="width:94px"><col style="width:94px"><col style="width:94px"><col style="width:97px"></colgroup><tr style="height:62px"><th style="font-size:13px;line-height:23px;padding-bottom:2px">用能单元</th><th style="font-size:13px;line-height:23px;padding-bottom:2px">电力(kWh)</th><th style="font-size:13px;line-height:23px;padding-bottom:2px">天然气(m³)</th><th style="font-size:13px;line-height:23px;padding-bottom:2px">蒸汽(GJ)</th><th style="font-size:13px;line-height:23px;padding-bottom:2px">自来水(t)</th><th style="font-size:13px;line-height:23px;padding-bottom:2px">综合能源消<br>费量(kgce)</th></tr><tr style="height:40px"><td>全厂</td><td>10660</td><td>1176</td><td></td><td>7240</td><td>2874.19</td></tr><tr style="height:40px"><td>一分厂</td><td></td><td></td><td>1149</td><td>1217</td><td>39.18</td></tr><tr style="height:40px"><td>二分厂</td><td>2351</td><td></td><td>1210</td><td>1236</td><td>330.2</td></tr><tr style="height:40px"><td>三分厂</td><td>3609</td><td></td><td>1200</td><td>1229</td><td>484.47</td></tr><tr style="height:40px"><td>四分厂</td><td>2370</td><td></td><td>1189</td><td>1195</td><td>331.82</td></tr><tr style="height:40px"><td></td><td></td><td></td><td></td><td></td><td></td></tr></table></div>
<div class="sec" style="left:782px;top:611px">碳排放分布</div>
<div class="sel" style="left:1016px;top:609px;width:100px"><span class="v">用能单元</span><svg class="sa" viewBox="0 0 10 6"><path d="M0.5 0.5L5 5L9.5 0.5" fill="none" stroke="#c0c4cc" stroke-width="1"/></svg></div>
<div class="sel" style="left:1126px;top:609px;width:80px"><span class="v">日</span><svg class="sa" viewBox="0 0 10 6"><path d="M0.5 0.5L5 5L9.5 0.5" fill="none" stroke="#c0c4cc" stroke-width="1"/></svg></div>
<div class="sel dt" style="left:1216px;top:609px;width:120px"><svg class="ci" viewBox="0 0 11 11"><rect x="0.5" y="1.5" width="10" height="9" fill="none" stroke="#c0c4cc"/><path d="M0.5 4h10M3 0v2M8 0v2M2.5 6h1M5 6h1M7.5 6h1M2.5 8h1M5 8h1M7.5 8h1" stroke="#c0c4cc"/></svg><span class="v">2025-10-31</span></div>
<div class="box" style="left:781px;top:637px;width:555px;height:271px"></div>
<svg class="a" style="left:0;top:0" width="1909" height="911" viewBox="0 0 1909 911"><path d="M1086.00 684.90A88 88 0 0 1 1155.13 718.44L1117.81 747.84A40.5 40.5 0 0 0 1086.00 732.40z" fill="#5470c6"/><path d="M1155.13 718.44A88 88 0 0 1 1154.71 827.88L1117.62 798.20A40.5 40.5 0 0 0 1117.81 747.84z" fill="#91cc75"/><path d="M1154.71 827.88A88 88 0 0 1 1085.50 860.90L1085.77 813.40A40.5 40.5 0 0 0 1117.62 798.20z" fill="#fac858"/><path d="M1085.50 860.90A88 88 0 0 1 1016.36 826.70L1053.95 797.66A40.5 40.5 0 0 0 1085.77 813.40z" fill="#ee6666"/><path d="M1016.36 826.70A88 88 0 0 1 1086.00 684.90L1086.00 732.40A40.5 40.5 0 0 0 1053.95 797.66z" fill="#73c0de"/><path d="M1123.8 693.9L1131.6 680.2H1145.3" fill="none" stroke="#5470c6" stroke-width="1"/><path d="M1173.5 772.4H1204" fill="none" stroke="#91cc75" stroke-width="1"/><path d="M1124.5 852.6L1131.6 863.8H1145" fill="none" stroke="#fac858" stroke-width="1"/><path d="M1047 852.6L1039.4 863.8H1025" fill="none" stroke="#ee6666" stroke-width="1"/><path d="M1007 733.8L993.4 727H979" fill="none" stroke="#73c0de" stroke-width="1"/><text x="1150.5" y="683.7" text-anchor="start" font-size="12" fill="#333" font-family="Liberation Sans">一分厂: 14.38%</text><text x="1209" y="776.6" text-anchor="start" font-size="12" fill="#333" font-family="Liberation Sans">三分厂: 21.36%</text><text x="1150.5" y="869" text-anchor="start" font-size="12" fill="#333" font-family="Liberation Sans">二分厂: 14.35%</text><text x="1020" y="869" text-anchor="end" font-size="12" fill="#333" font-family="Liberation Sans">四分厂: 14.44%</text><text x="974" y="731.2" text-anchor="end" font-size="12" fill="#333" font-family="Liberation Sans">锅炉房: 35.47%</text><rect x="807" y="663" width="25" height="14" rx="3" fill="#5470c6"/><text x="837" y="672.2" text-anchor="start" font-size="12" fill="#333" font-family="Liberation Sans">一分厂</text><rect x="807" y="687" width="25" height="14" rx="3" fill="#91cc75"/><text x="837" y="696.2" text-anchor="start" font-size="12" fill="#333" font-family="Liberation Sans">三分厂</text><rect x="807" y="711" width="25" height="14" rx="3" fill="#fac858"/><text x="837" y="720.2" text-anchor="start" font-size="12" fill="#333" font-family="Liberation Sans">二分厂</text><rect x="807" y="735" width="25" height="14" rx="3" fill="#ee6666"/><text x="837" y="744.2" text-anchor="start" font-size="12" fill="#333" font-family="Liberation Sans">四分厂</text><rect x="807" y="759" width="25" height="14" rx="3" fill="#73c0de"/><text x="837" y="768.2" text-anchor="start" font-size="12" fill="#333" font-family="Liberation Sans">锅炉房</text></svg>
</body></html>
